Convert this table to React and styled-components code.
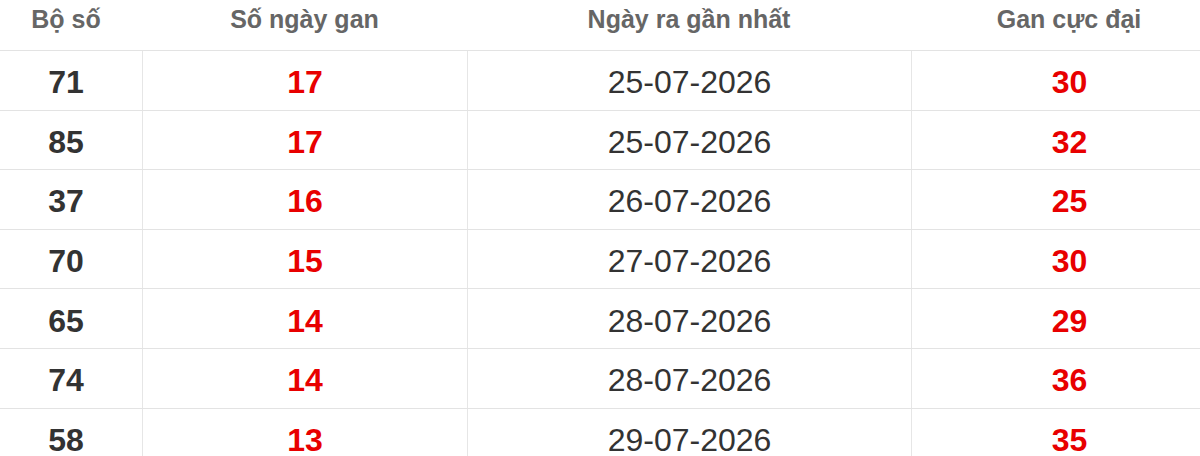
import styled, { createGlobalStyle } from "styled-components";

const GlobalStyle = createGlobalStyle`
  html, body {
    margin: 0;
    padding: 0;
    background: #fff;
    overflow: hidden;
  }
  body {
    font-family: "Liberation Sans", Arial, sans-serif;
  }
`;

const Table = styled.div`
  width: 1237px;
  margin-left: -10px;
  background: #fff;
`;

const Row = styled.div`
  display: grid;
  grid-template-columns: 152px 325px 444px 316px;
  height: ${(p) => (p.$head ? "51px" : "59.6px")};
  box-sizing: border-box;
  border-bottom: 1px solid #e3e3e3;
`;

const HeadCell = styled.div`
  display: flex;
  align-items: center;
  justify-content: center;
  padding-bottom: 11px;
  box-sizing: border-box;
  font-size: 25px;
  font-weight: bold;
  color: #666;
`;

const Cell = styled.div`
  display: flex;
  align-items: center;
  justify-content: center;
  padding-top: 5px;
  box-sizing: border-box;
  font-size: 32px;
  font-weight: ${(p) => (p.$bold ? "bold" : "normal")};
  color: ${(p) => (p.$red ? "#e80000" : "#333")};
  & + & {
    border-left: 1px solid #e6e6e6;
  }
`;

const rows = [
  ["71", "17", "25-07-2026", "30"],
  ["85", "17", "25-07-2026", "32"],
  ["37", "16", "26-07-2026", "25"],
  ["70", "15", "27-07-2026", "30"],
  ["65", "14", "28-07-2026", "29"],
  ["74", "14", "28-07-2026", "36"],
  ["58", "13", "29-07-2026", "35"],
];

export default function App() {
  return (
    <>
      <GlobalStyle />
      <Table>
        <Row $head>
          <HeadCell>Bộ số</HeadCell>
          <HeadCell>Số ngày gan</HeadCell>
          <HeadCell>Ngày ra gần nhất</HeadCell>
          <HeadCell>Gan cực đại</HeadCell>
        </Row>
        {rows.map((r, i) => (
          <Row key={i}>
            <Cell $bold>{r[0]}</Cell>
            <Cell $bold $red>{r[1]}</Cell>
            <Cell>{r[2]}</Cell>
            <Cell $bold $red>{r[3]}</Cell>
          </Row>
        ))}
      </Table>
    </>
  );
}
